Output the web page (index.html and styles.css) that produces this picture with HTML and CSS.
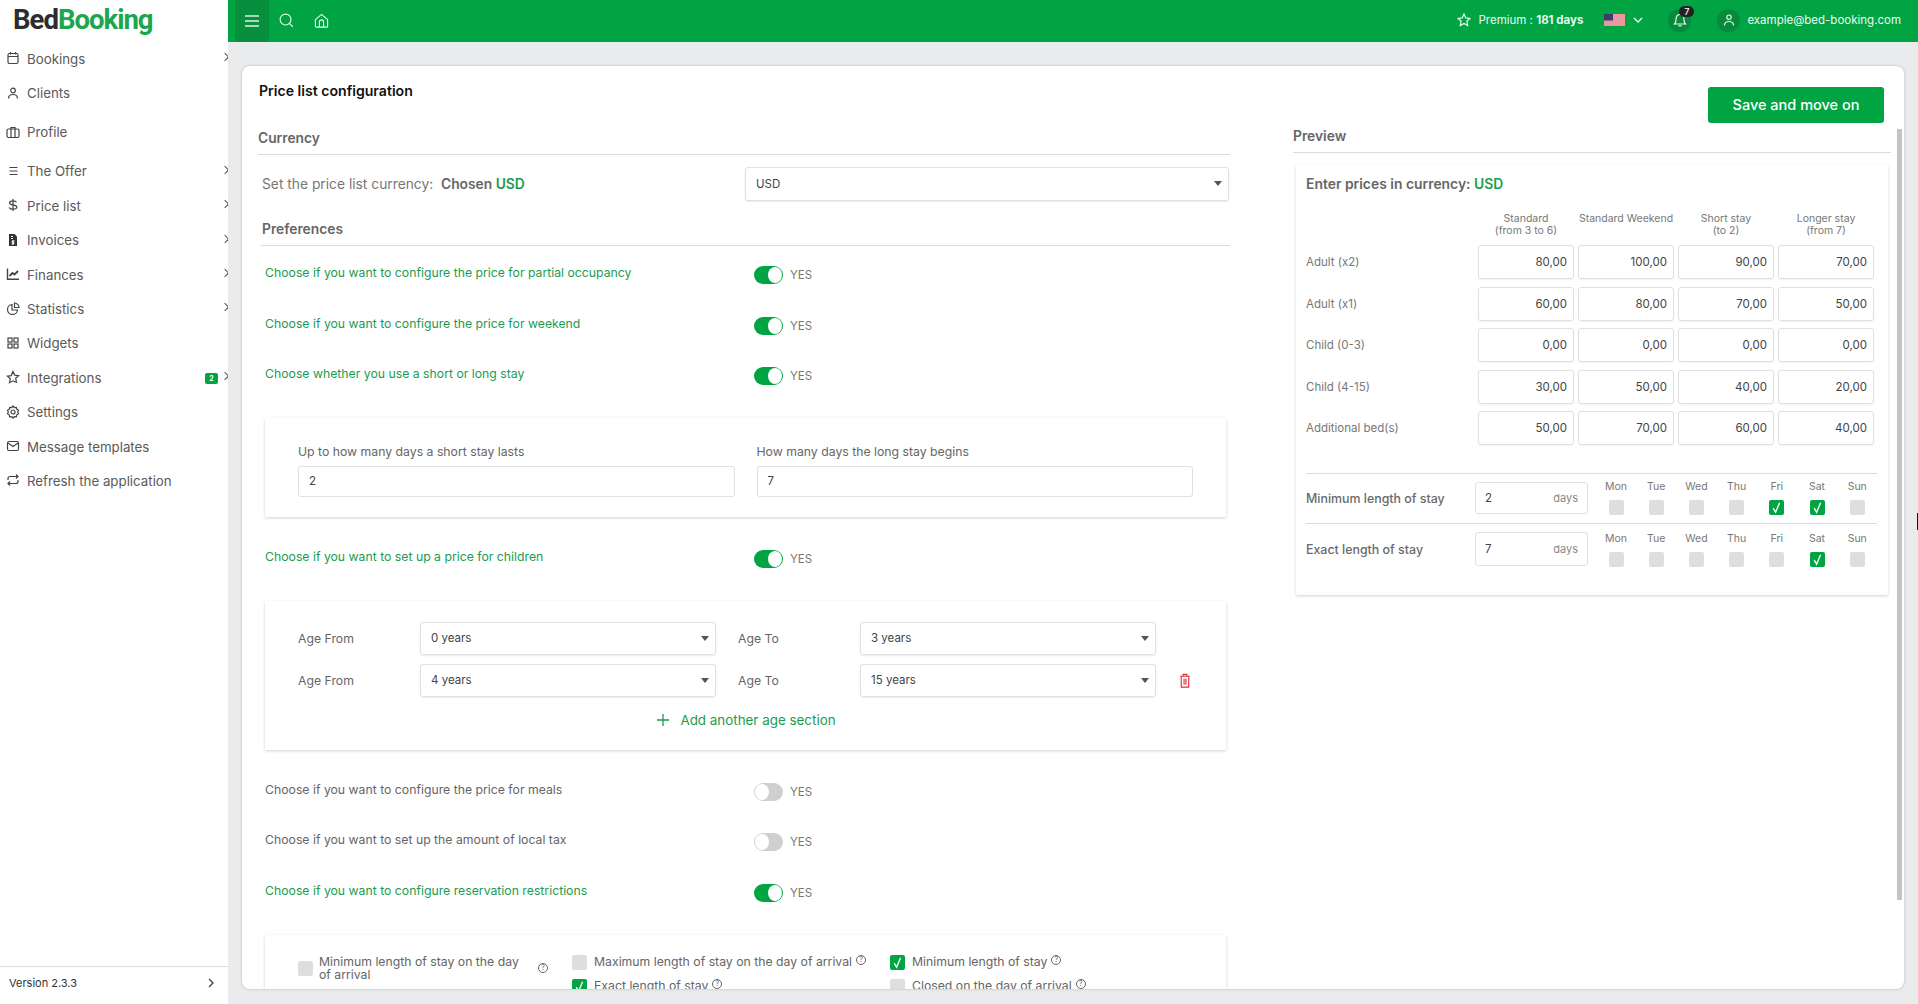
FILE: index.html
```html
<!DOCTYPE html>
<html lang="en">
<head>
<meta charset="utf-8">
<title>Price list configuration</title>
<link rel="stylesheet" href="styles.css">
</head>
<body>
<svg class="sprite" xmlns="http://www.w3.org/2000/svg">
  <symbol id="i-check" viewBox="0 0 15 15"><path d="M4.2 8.2 6.6 12.2 10.6 2.8" fill="none" stroke="#fff" stroke-width="1.3"/></symbol>
  <symbol id="i-chev" viewBox="0 0 8 12"><path d="M2 2l4 4-4 4" fill="none" stroke="currentColor" stroke-width="1.4"/></symbol>
</svg>
<div class="app">
  <aside class="sidebar">
    <div class="logo"><span class="logo-bed">Bed</span><span class="logo-booking">Booking</span></div>
    <nav class="nav">
      <a class="nav-item has-sub"><svg class="nav-icon" viewBox="0 0 14 14"><rect x="2" y="2.5" width="10" height="10" rx="1.5"/><path d="M2 5.5h10M4.5 1v2.5M9.5 1v2.5"/></svg><span>Bookings</span></a>
      <a class="nav-item"><svg class="nav-icon" viewBox="0 0 14 14"><circle cx="7" cy="4.5" r="2.3"/><path d="M2.5 12.5c0-3 2-4 4.5-4s4.500 1 4.500 4"/></svg><span>Clients</span></a>
      <a class="nav-item nav-tall"><svg class="nav-icon" viewBox="0 0 14 14"><rect x="1" y="4" width="12" height="8.5" rx="1.5"/><path d="M5 12.500V2.500h4v10"/></svg><span>Profile</span></a>
      <a class="nav-item has-sub"><svg class="nav-icon" viewBox="0 0 14 14"><path d="M3.500 3.500h8M3.500 7h8M3.500 10.500h8"/></svg><span>The Offer</span></a>
      <a class="nav-item has-sub"><svg class="nav-icon" viewBox="0 0 14 14"><path d="M10.500 4.200C10 3 8.800 2.800 7 2.800c-2 0-3.500.7-3.500 2.100C3.500 7.800 10.800 6 10.800 9.100c0 1.500-1.700 2.100-3.800 2.100-2 0-3.300-.6-3.800-1.800M7 1v12"/></svg><span>Price list</span></a>
      <a class="nav-item has-sub"><svg class="nav-icon nav-icon-solid" viewBox="0 0 14 14"><path d="M3 1h5.500L11 3.500V13H3z"/><path class="cut" d="M5 3.500h2M5 5.500h2M7 7v4.500M8.500 8H6.200v1.500h1.600V11H5.500"/></svg><span>Invoices</span></a>
      <a class="nav-item has-sub"><svg class="nav-icon" viewBox="0 0 14 14"><path d="M1.500 1.500v10.800h11.500" stroke-width="1.400"/><path d="M3.500 9l3-3 2 1.500 3.500-3.500" stroke-width="1.800"/></svg><span>Finances</span></a>
      <a class="nav-item has-sub"><svg class="nav-icon" viewBox="0 0 14 14"><path d="M6 2.500a5 5 0 1 0 5.500 5.500H6z"/><path d="M8.500 1a5 5 0 0 1 4.500 4.500H8.500z"/></svg><span>Statistics</span></a>
      <a class="nav-item"><svg class="nav-icon" viewBox="0 0 14 14"><rect x="2" y="2" width="4" height="4"/><rect x="8" y="2" width="4" height="4"/><rect x="2" y="8" width="4" height="4"/><rect x="8" y="8" width="4" height="4"/></svg><span>Widgets</span></a>
      <a class="nav-item has-sub"><svg class="nav-icon" viewBox="0 0 14 14"><path d="M7 1.500l1.700 3.600 3.900.5-2.900 2.700.8 3.900L7 10.800l-3.500 1.900.8-3.900-2.900-2.700 3.900-.5z"/></svg><span>Integrations</span><b class="nav-badge">2</b></a>
      <a class="nav-item"><svg class="nav-icon" viewBox="0 0 14 14"><path d="M7 1l1.300 1.500 2-.2.5 2 1.700 1-.8 1.700.8 1.800-1.700 1-.5 2-2-.2L7 13l-1.300-1.400-2 .2-.5-2-1.700-1 .8-1.800-.8-1.700 1.700-1 .5-2 2 .2z"/><circle cx="7" cy="7" r="2"/></svg><span>Settings</span></a>
      <a class="nav-item"><svg class="nav-icon" viewBox="0 0 14 14"><rect x="1.500" y="2.500" width="11" height="9" rx="1.500"/><path d="M2 4l5 3.500L12 4"/></svg><span>Message templates</span></a>
      <a class="nav-item"><svg class="nav-icon" viewBox="0 0 14 14"><path d="M2 7V5.500C2 4.300 3 3.500 4 3.500h8M10 1.500l2 2-2 2M12 7v1.500c0 1.200-1 2-2 2H2M4 8.500l-2 2 2 2"/></svg><span>Refresh the application</span></a>
    </nav>
    <div class="version"><span>Version 2.3.3</span><svg class="version-chev"><use href="#i-chev"/></svg></div>
  </aside>

  <div class="right-area">
    <header class="topbar">
      <div class="topbar-left">
        <button class="menu-btn"><svg viewBox="0 0 14 12" class="tb-icon-menu"><path d="M0 1h14M0 6h14M0 11h14"/></svg></button>
        <svg viewBox="0 0 16 16" class="tb-icon tb-search"><circle cx="7" cy="7" r="5.800"/><path d="M11.200 11.200 14.800 14.800"/></svg>
        <svg viewBox="0 0 16 16" class="tb-icon tb-home"><path d="M1.500 7 8 1.500 14.500 7v7a1 1 0 0 1-1 1h-11a1 1 0 0 1-1-1z"/><path d="M5.800 15V9.500a2.200 2.200 0 0 1 4.400 0V15"/></svg>
      </div>
      <div class="topbar-right">
        <svg viewBox="0 0 14 14" class="tb-icon tb-star"><path d="M7 1l1.800 3.900 4.200.5-3.100 2.900.8 4.200L7 10.400l-3.700 2.100.8-4.200L1 5.400l4.200-.5z"/></svg>
        <span class="premium">Premium : <b>181 days</b></span>
        <svg class="flag" viewBox="0 0 21 12"><rect width="21" height="12" fill="#fff"/><path d="M0 1h21M0 3h21M0 5h21M0 7h21M0 9h21M0 11h21" stroke="#d0303c" stroke-width="1"/><rect width="9" height="6.500" fill="#3c3b6e"/></svg>
        <svg class="tb-chev" viewBox="0 0 10 6"><path d="M1 1l4 4 4-4"/></svg>
        <span class="round-btn round-bell"><svg viewBox="0 0 14 14" class="tb-icon"><path d="M1.500 11h11c-1.200-1-1.500-2-1.500-4.500C11 3.500 9.500 1.500 7 1.500S3 3.500 3 6.500C3 9 2.700 10 1.500 11zM5.500 12.800h3"/></svg><b class="bell-count">7</b></span>
        <span class="round-btn round-user"><svg viewBox="0 0 14 14" class="tb-icon"><circle cx="7" cy="4.200" r="2.200"/><path d="M2.500 12.500c0-3 2-4 4.500-4s4.500 1 4.500 4"/></svg></span>
        <span class="email">example@bed-booking.com</span>
      </div>
    </header>

    <main class="main">
      <section class="card">
        <div class="col-left">
          <h1 class="page-title">Price list configuration</h1>
          <h2 class="section-head section-currency">Currency</h2>
          <div class="currency-row">
            <div class="currency-label">Set the price list currency: &nbsp;<b>Chosen <em>USD</em></b></div>
            <div class="select select-currency">USD</div>
          </div>
          <h2 class="section-head section-prefs">Preferences</h2>

          <div class="pref"><span class="pref-text on">Choose if you want to configure the price for partial occupancy</span><span class="toggle on"></span><span class="yes">YES</span></div>
          <div class="pref"><span class="pref-text on">Choose if you want to configure the price for weekend</span><span class="toggle on"></span><span class="yes">YES</span></div>
          <div class="pref"><span class="pref-text on">Choose whether you use a short or long stay</span><span class="toggle on"></span><span class="yes">YES</span></div>

          <div class="box box-stay">
            <div class="stay-field"><label>Up to how many days a short stay lasts</label><div class="text-input">2</div></div>
            <div class="stay-field"><label>How many days the long stay begins</label><div class="text-input">7</div></div>
          </div>

          <div class="pref pref-after-box"><span class="pref-text on">Choose if you want to set up a price for children</span><span class="toggle on"></span><span class="yes">YES</span></div>

          <div class="box box-ages">
            <div class="age-row">
              <span class="age-label">Age From</span><div class="select">0 years</div>
              <span class="age-label age-label-to">Age To</span><div class="select">3 years</div>
            </div>
            <div class="age-row">
              <span class="age-label">Age From</span><div class="select">4 years</div>
              <span class="age-label age-label-to">Age To</span><div class="select">15 years</div>
              <svg class="trash" viewBox="0 0 12 16"><path d="M1 3.500h10M4 3.500V1.500h4v2M2 3.500V15h8V3.500M5 6v6.500M7 6v6.500"/></svg>
            </div>
            <div class="add-age"><svg viewBox="0 0 12 12" class="plus"><path d="M6 0v12M0 6h12"/></svg><span>Add another age section</span></div>
          </div>

          <div class="pref pref-after-box"><span class="pref-text">Choose if you want to configure the price for meals</span><span class="toggle"></span><span class="yes">YES</span></div>
          <div class="pref"><span class="pref-text">Choose if you want to set up the amount of local tax</span><span class="toggle"></span><span class="yes">YES</span></div>
          <div class="pref"><span class="pref-text on">Choose if you want to configure reservation restrictions</span><span class="toggle on"></span><span class="yes">YES</span></div>

          <div class="box box-restrict">
            <div class="restrict restrict-tall"><span class="check"></span><span class="restrict-text">Minimum length of stay on the day of arrival</span><span class="help help-far">?</span></div>
            <div class="restrict"><span class="check"></span><span>Maximum length of stay on the day of arrival</span><span class="help">?</span></div>
            <div class="restrict"><span class="check on"><svg><use href="#i-check"/></svg></span><span>Minimum length of stay</span><span class="help">?</span></div>
            <div class="restrict"><span class="check on"><svg><use href="#i-check"/></svg></span><span>Exact length of stay</span><span class="help">?</span></div>
            <div class="restrict"><span class="check"></span><span>Closed on the day of arrival</span><span class="help">?</span></div>
          </div>
        </div>

        <div class="col-right">
          <button class="save-btn">Save and move on</button>
          <h2 class="section-head section-preview">Preview</h2>
          <div class="preview">
            <div class="preview-title">Enter prices in currency: <em>USD</em></div>
            <div class="price-grid">
              <span></span>
              <span class="col-head">Standard<br>(from 3 to 6)</span>
              <span class="col-head">Standard Weekend</span>
              <span class="col-head">Short stay<br>(to 2)</span>
              <span class="col-head">Longer stay<br>(from 7)</span>

              <span class="row-label">Adult (x2)</span><div class="price">80,00</div><div class="price">100,00</div><div class="price">90,00</div><div class="price">70,00</div>
              <span class="row-label">Adult (x1)</span><div class="price">60,00</div><div class="price">80,00</div><div class="price">70,00</div><div class="price">50,00</div>
              <span class="row-label">Child (0-3)</span><div class="price">0,00</div><div class="price">0,00</div><div class="price">0,00</div><div class="price">0,00</div>
              <span class="row-label">Child (4-15)</span><div class="price">30,00</div><div class="price">50,00</div><div class="price">40,00</div><div class="price">20,00</div>
              <span class="row-label">Additional bed(s)</span><div class="price">50,00</div><div class="price">70,00</div><div class="price">60,00</div><div class="price">40,00</div>
            </div>

            <div class="stay-row stay-row-first">
              <span class="stay-name">Minimum length of stay</span>
              <div class="days-input"><span>2</span><i>days</i></div>
              <div class="days">
                <div class="day"><span>Mon</span><span class="check"></span></div>
                <div class="day"><span>Tue</span><span class="check"></span></div>
                <div class="day"><span>Wed</span><span class="check"></span></div>
                <div class="day"><span>Thu</span><span class="check"></span></div>
                <div class="day"><span>Fri</span><span class="check on"><svg><use href="#i-check"/></svg></span></div>
                <div class="day"><span>Sat</span><span class="check on"><svg><use href="#i-check"/></svg></span></div>
                <div class="day"><span>Sun</span><span class="check"></span></div>
              </div>
            </div>
            <div class="stay-row stay-row-second">
              <span class="stay-name">Exact length of stay</span>
              <div class="days-input"><span>7</span><i>days</i></div>
              <div class="days">
                <div class="day"><span>Mon</span><span class="check"></span></div>
                <div class="day"><span>Tue</span><span class="check"></span></div>
                <div class="day"><span>Wed</span><span class="check"></span></div>
                <div class="day"><span>Thu</span><span class="check"></span></div>
                <div class="day"><span>Fri</span><span class="check"></span></div>
                <div class="day"><span>Sat</span><span class="check on"><svg><use href="#i-check"/></svg></span></div>
                <div class="day"><span>Sun</span><span class="check"></span></div>
              </div>
            </div>
          </div>
        </div>
        <div class="scrollbar"></div>
      </section>
    </main>
  </div>
</div>
<div class="text-cursor"></div>
</body>
</html>
```

FILE: styles.css
```css
* { box-sizing: border-box; }
html, body { margin: 0; height: 100%; overflow: hidden; }
body { font-family: "Inter", "Open Sans", sans-serif; font-size: 12px; color: #666; background: #e9ebec; }
.sprite { display: none; }
em, i { font-style: normal; }
h1, h2 { margin: 0; }

.app { display: flex; height: 1004px; }

/* Sidebar */
.sidebar { width: 228px; flex: none; background: #fff; display: flex; flex-direction: column; overflow: hidden; }
.logo { height: 42px; padding-left: 13px; font-family: "Roboto", sans-serif; font-weight: 700; font-size: 27.500px; line-height: 40px; letter-spacing: -1px; }
.logo-bed { color: #2d2d2d; }
.logo-booking { color: #1aa750; }
.nav { flex: 1; }
.nav-item { position: relative; display: flex; align-items: center; height: 34.400px; padding-left: 6px; color: #5a5a5a; font-size: 13.300px; }
.nav-item > span { margin-top: -1px; }
.nav-tall { height: 44px; }
.nav-icon { width: 14px; height: 14px; margin-right: 7px; margin-top: -2px; fill: none; stroke: #444; stroke-width: 1.200; flex: none; }
.nav-icon-solid { fill: #333; stroke: none; }
.nav-icon-solid .cut { fill: none; stroke: #fff; stroke-width: 1; }
.has-sub::after { content: ""; position: absolute; right: 0; top: 12px; width: 5px; height: 5px; border-top: 1px solid #555; border-right: 1px solid #555; transform: rotate(45deg); }
.nav-badge { position: absolute; right: 10px; top: 12px; width: 13px; height: 11px; background: #00a443; border-radius: 2px; color: #fff; font-size: 7px; line-height: 11px; text-align: center; }
.version { height: 38px; border-top: 1px solid #dcdcdc; display: flex; align-items: center; justify-content: space-between; padding: 0 13px 5px 9px; color: #333; font-size: 11px; flex: none; }
.version-chev { width: 8px; height: 12px; color: #444; }

/* Top bar */
.right-area { flex: 1; min-width: 0; display: flex; flex-direction: column; }
.topbar { height: 42px; flex: none; background: #00a443; display: flex; align-items: stretch; justify-content: space-between; color: #fff; }
.topbar-left { display: flex; align-items: center; padding-left: 7px; }
.menu-btn { width: 34px; height: 42px; border: 0; padding: 0; background: #078f3e; display: flex; align-items: center; justify-content: center; }
.tb-icon-menu { width: 14px; height: 12px; fill: none; stroke: #d8f5e2; stroke-width: 1.300; }
.tb-icon { fill: none; stroke: #e6f9ec; stroke-width: 1.200; }
.tb-search { width: 15px; height: 15px; margin-left: 10px; margin-bottom: 1px; }
.tb-home { width: 15px; height: 15px; margin-left: 20px; margin-bottom: 1px; }
.topbar-right { display: flex; align-items: center; padding: 0 17px 2px 0; }
.tb-star { width: 14px; height: 14px; }
.premium { margin-left: 7px; font-size: 11.500px; color: #e8f8ee; }
.premium b { font-weight: 700; }
.flag { width: 21px; height: 12px; margin-left: 21px; }
.tb-chev { width: 10px; height: 6px; margin-left: 8px; fill: none; stroke: #fff; stroke-width: 1.300; }
.round-btn { position: relative; width: 23px; height: 23px; border-radius: 50%; background: #078a3c; display: flex; align-items: center; justify-content: center; }
.round-btn .tb-icon { width: 14px; height: 14px; }
.round-bell { margin-left: 25px; }
.bell-count { position: absolute; left: 11px; top: -3px; width: 15px; height: 11px; border-radius: 6px; background: #222; color: #fff; font-size: 9px; font-weight: 500; line-height: 11px; text-align: center; }
.round-user { margin-left: 26px; }
.email { margin-left: 7px; font-size: 11.500px; color: #eefaf2; }

/* Main */
.main { flex: 1; min-height: 0; padding: 24px 14px 15px; }
.card { position: relative; height: 100%; background: #fff; border-radius: 8px; box-shadow: 0 0 3px rgba(0,0,0,.22); overflow: hidden; display: flex; padding-left: 16px; }
.col-left { width: 972px; flex: none; }
.col-right { width: 598px; flex: none; margin-left: 63px; padding-top: 21px; display: flex; flex-direction: column; }
.page-title { font-size: 14.100px; font-weight: 600; color: #111; line-height: 20px; margin: 15px 0 0 1px; }
.section-head { font-size: 13.800px; font-weight: 600; color: #666; line-height: 22px; padding-bottom: 5px; border-bottom: 1px solid #dcdcdc; }
.section-currency { margin-top: 26px; }
.section-prefs { margin-left: 3px; padding-top: 17px; text-indent: 1px; }
.section-preview { margin-top: 2px; }

.currency-row { display: flex; align-items: center; justify-content: space-between; margin-top: 12px; padding: 0 1px 0 4px; }
.currency-label { font-size: 13.800px; color: #777; }
.currency-label b { font-weight: 600; color: #666; }
.currency-label em, .preview-title em { color: #1a9c50; font-weight: 600; }
.select { position: relative; width: 296px; height: 33px; line-height: 31px; border: 1px solid #e0e0e0; border-radius: 3px; padding-left: 10px; font-size: 11.500px; color: #444; box-shadow: 0 1px 2px rgba(0,0,0,.08); }
.select::after { content: ""; position: absolute; right: 6px; top: 13px; border: 4px solid transparent; border-top: 5px solid #555; border-bottom: 0; }
.select-currency { width: 484px; height: 34px; line-height: 33px; }

.pref { display: flex; align-items: center; height: 50.500px; padding-left: 7px; flex: none; }
.section-prefs + .pref { margin-top: 4px; }
.pref-after-box { margin-top: 17px; }
.pref-text { width: 489px; flex: none; margin-top: -5px; font-size: 12.250px; color: #666; }
.pref-text.on { color: #1a9c50; }
.toggle { position: relative; width: 29px; height: 18px; border-radius: 9px; background: #cfcfcf; flex: none; }
.toggle::after { content: ""; position: absolute; left: 1px; top: 1px; width: 14px; height: 16px; border-radius: 50%; background: #fff; }
.toggle.on { background: #00a443; }
.toggle.on::after { left: 14px; }
.yes { margin-left: 7px; font-size: 11.500px; color: #777; }

.box { margin-left: 7px; width: 961px; background: #fff; box-shadow: 0 1px 3px rgba(0,0,0,.18); }
.box-stay { height: 99px; margin-top: 16.500px; padding: 24px 33px 0 33px; display: flex; gap: 22px; }
.stay-field { flex: 1; }
.stay-field label { display: block; height: 20px; line-height: 20px; font-size: 12.250px; color: #666; margin-bottom: 4px; }
.text-input { height: 31px; line-height: 29px; border: 1px solid #e0e0e0; border-radius: 3px; padding-left: 10px; font-size: 11.500px; color: #444; }

.box-ages { height: 149px; margin-top: 16px; padding: 21px 0 0 33px; }
.age-row { display: flex; align-items: center; margin-bottom: 9.500px; }
.age-label { width: 122px; flex: none; font-size: 12.250px; color: #666; }
.age-label-to { margin-left: 22px; }
.trash { width: 12px; height: 15px; margin-left: 23px; fill: none; stroke: #dc2f3c; stroke-width: 1.200; }
.add-age { display: flex; align-items: center; justify-content: center; height: 24px; margin: 11px 31px 0 0; color: #1a9c50; font-size: 13.400px; }
.plus { width: 12px; height: 12px; margin-right: 11px; fill: none; stroke: #1a9c50; stroke-width: 1.300; }

.box-restrict { margin-top: 17px; padding: 20px 0 0 33px; display: grid; grid-template-columns: 274px 318px 1fr; grid-auto-rows: 24px; font-size: 12.250px; color: #666; line-height: 13px; }
.restrict { display: flex; align-items: flex-start; }
.restrict .check { margin-right: 7px; }
.restrict-tall { grid-row: span 2; align-items: flex-start; }
.restrict-tall .check { margin-top: 6px; margin-right: 6px; }
.restrict-text { width: 205px; }
.help { display: inline-block; width: 10px; height: 10px; margin-left: 4px; border: 1px solid #666; border-radius: 50%; font-size: 7px; line-height: 8px; text-align: center; flex: none; }
.help-far { margin: 8px 0 0 14px; }

.check { display: block; width: 15px; height: 15px; background: #dedede; border-radius: 2px; flex: none; }
.check.on { background: #00a443; }
.check svg { display: block; width: 15px; height: 15px; }

/* Right column */
.save-btn { align-self: flex-end; width: 176px; height: 36px; margin-right: 7px; padding: 0 0 2px; border: 0; border-radius: 3px; background: #00a443; color: #fff; font: 500 14.500px "Inter", sans-serif; flex: none; }
.preview { margin: 12px 3px 0; height: 430px; padding: 9px 11px 0 10px; box-shadow: 0 1px 3px rgba(0,0,0,.18); border-radius: 2px; flex: none; }
.preview-title { font-size: 13.900px; font-weight: 600; color: #666; line-height: 21px; }
.price-grid { display: grid; grid-template-columns: 168px repeat(4, 96px); column-gap: 4px; row-gap: 7.500px; margin-top: 17px; }
.price-grid > span:nth-child(-n+5) { margin-bottom: 2.500px; }
.col-head { text-align: center; font-size: 10.500px; line-height: 11.500px; height: 23px; color: #777; padding-top: 1px; }
.row-label { align-self: center; font-size: 11.500px; color: #777; }
.price { height: 34px; line-height: 32px; border: 1px solid #e0e0e0; border-radius: 3px; padding-right: 6px; text-align: right; font-size: 11.500px; color: #444; box-shadow: 0 1px 2px rgba(0,0,0,.06); }
.stay-row { display: flex; align-items: flex-start; border-top: 1px solid #dcdcdc; height: 50px; }
.stay-row-first { margin-top: 28px; padding-top: 4px; }
.stay-row-second { padding-top: 6px; }
.stay-name { width: 169px; flex: none; font-size: 12.400px; font-weight: 500; color: #6a6a6a; align-self: center; margin-top: -5px; }
.days-input { width: 113px; display: flex; justify-content: space-between; align-items: center; border: 1px solid #e0e0e0; border-radius: 3px; padding: 0 9px; font-size: 11.500px; color: #444; flex: none; }
.days-input i { font-size: 11px; color: #888; }
.stay-row-first .days-input { height: 32px; margin-top: 4px; }
.stay-row-second .days-input { height: 34px; margin-top: 2px; }
.days { display: grid; grid-template-columns: repeat(7, 40.200px); margin-left: 8px; }
.day { display: flex; flex-direction: column; align-items: center; gap: 5px; padding-top: 1px; font-size: 10.500px; line-height: 16px; color: #777; }

.scrollbar { position: absolute; right: 2px; top: 63px; width: 5.500px; height: 771px; background: #c4c4c4; }
.text-cursor { position: fixed; right: 0; top: 513px; width: 1px; height: 17px; background: #111; }
```
